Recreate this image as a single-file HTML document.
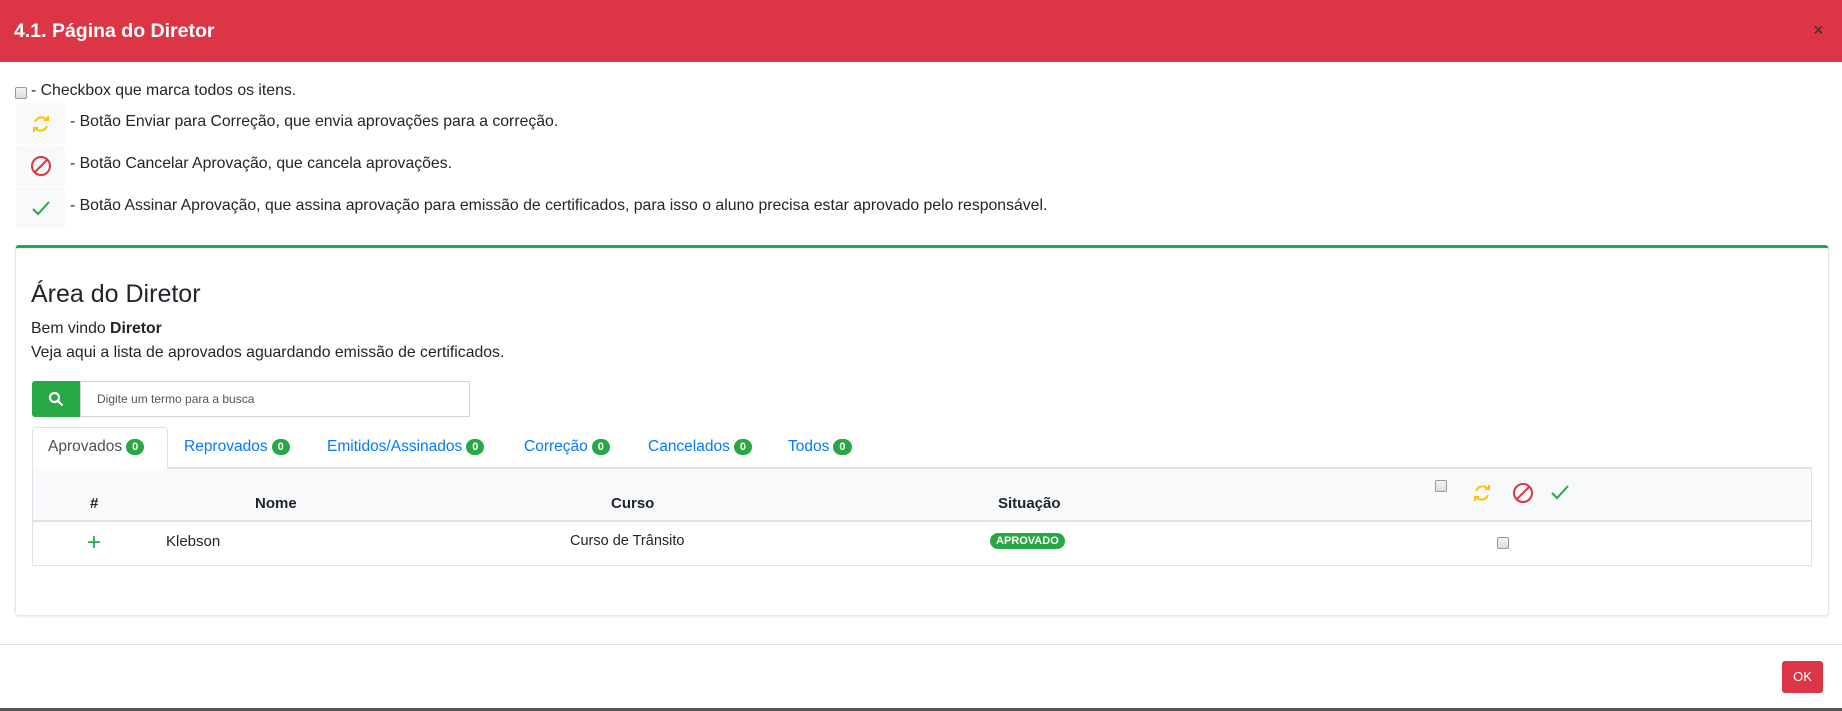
<!DOCTYPE html>
<html><head><meta charset="utf-8"><style>
body{margin:0;width:1842px;height:711px;overflow:hidden;background:#fff;font-family:"Liberation Sans",sans-serif;color:#212529;position:relative}
.a{position:absolute;white-space:nowrap}
.cb{position:absolute;width:10px;height:10px;border:1px solid #999;border-radius:2px;background:linear-gradient(#f4f4f4,#ddd)}
.ib{position:absolute;left:16px;width:49px;height:41px;background:#f8f9fa;border-radius:3px}
.ib svg{position:absolute;left:14px;top:10px}
.t{font-size:15.8px}
.tab{position:absolute;top:438px;font-size:15.5px;color:#007bff}
.bd{display:inline-block;background:#28a745;color:#fff;font-size:11px;font-weight:bold;border-radius:9px;padding:2px 6px;margin-left:4px;vertical-align:1px}
.th{font-size:15px;font-weight:bold}
</style></head><body>
<div class="a" style="left:0;top:0;width:1842px;height:62px;background:#dc3545"></div>
<div class="a" style="left:14px;top:20px;color:#fff;font-size:19.5px;font-weight:bold">4.1. Página do Diretor</div>
<div class="a" style="left:1813px;top:20px;color:#333;font-size:18px">×</div>

<div class="cb" style="left:15px;top:87px"></div>
<div class="a t" style="left:31px;top:82px">- Checkbox que marca todos os itens.</div>
<div class="ib" style="top:103px"><svg width="22" height="22" viewBox="0 0 22 22" fill="none" stroke="#ffc107" stroke-width="2"><path d="M5 9a7 7 0 0 1 12-2"/><path d="M17 13a7 7 0 0 1-12 2"/><path d="M14 7h4V3" /><path d="M8 15H4v4"/></svg></div>
<div class="a t" style="left:70px;top:113px">- Botão Enviar para Correção, que envia aprovações para a correção.</div>
<div class="ib" style="top:145px"><svg width="22" height="22" viewBox="0 0 22 22" fill="none" stroke="#dc3545" stroke-width="2"><circle cx="11" cy="11" r="9"/><path d="M5 17L17 5"/></svg></div>
<div class="a t" style="left:70px;top:155px">- Botão Cancelar Aprovação, que cancela aprovações.</div>
<div class="ib" style="top:187px"><svg width="22" height="22" viewBox="0 0 22 22" fill="none" stroke="#28a745" stroke-width="2"><path d="M3 12l5 5L19 5"/></svg></div>
<div class="a t" style="left:70px;top:197px">- Botão Assinar Aprovação, que assina aprovação para emissão de certificados, para isso o aluno precisa estar aprovado pelo responsável.</div>

<div class="a" style="left:15px;top:245px;width:1812px;height:367px;border:1px solid #e6e6e6;border-top:3px solid #28a745;border-radius:4px;box-shadow:0 1px 2px rgba(0,0,0,.08)"></div>
<div class="a" style="left:31px;top:280px;font-size:25px">Área do Diretor</div>
<div class="a t" style="left:31px;top:320px">Bem vindo <b>Diretor</b></div>
<div class="a t" style="left:31px;top:344px">Veja aqui a lista de aprovados aguardando emissão de certificados.</div>

<div class="a" style="left:32px;top:381px;width:48px;height:36px;background:#28a745;border-radius:3px 0 0 3px"><svg style="position:absolute;left:16px;top:10px" width="16" height="16" viewBox="0 0 16 16" fill="none" stroke="#fff" stroke-width="2.2"><circle cx="6.5" cy="6.5" r="4.5"/><path d="M10 10l4.5 4.5"/></svg></div>
<div class="a" style="left:80px;top:381px;width:388px;height:34px;border:1px solid #ced4da"></div>
<div class="a" style="left:97px;top:392px;font-size:12px;color:#555">Digite um termo para a busca</div>

<div class="a" style="left:32px;top:427px;width:134px;height:41px;border:1px solid #dee2e6;border-bottom:none;border-radius:4px 4px 0 0;background:#fff;z-index:2"></div>
<div class="tab" style="left:48px;color:#495057;z-index:3">Aprovados<span class="bd">0</span></div>
<div class="tab" style="left:184px">Reprovados<span class="bd">0</span></div>
<div class="tab" style="left:327px">Emitidos/Assinados<span class="bd">0</span></div>
<div class="tab" style="left:524px">Correção<span class="bd">0</span></div>
<div class="tab" style="left:648px">Cancelados<span class="bd">0</span></div>
<div class="tab" style="left:788px">Todos<span class="bd">0</span></div>

<div class="a" style="left:32px;top:467px;width:1778px;height:96px;border:1px solid #dee2e6;border-top:2px solid #dee2e6"></div>
<div class="a" style="left:33px;top:469px;width:1778px;height:51px;background:#f8f9fa;border-bottom:2px solid #dee2e6"></div>
<div class="a th" style="left:90px;top:495px">#</div>
<div class="a th" style="left:255px;top:495px">Nome</div>
<div class="a th" style="left:611px;top:495px">Curso</div>
<div class="a th" style="left:998px;top:495px">Situação</div>
<div class="cb" style="left:1435px;top:480px"></div>
<svg class="a" style="left:1471px;top:482px" width="22" height="22" viewBox="0 0 22 22" fill="none" stroke="#ffc107" stroke-width="2"><path d="M5 9a7 7 0 0 1 12-2"/><path d="M17 13a7 7 0 0 1-12 2"/><path d="M14 7h4V3"/><path d="M8 15H4v4"/></svg>
<svg class="a" style="left:1512px;top:482px" width="22" height="22" viewBox="0 0 22 22" fill="none" stroke="#dc3545" stroke-width="2"><circle cx="11" cy="11" r="9"/><path d="M5 17L17 5"/></svg>
<svg class="a" style="left:1549px;top:481px" width="22" height="22" viewBox="0 0 22 22" fill="none" stroke="#28a745" stroke-width="2"><path d="M3 12l5 5L19 5"/></svg>

<div class="a" style="left:87px;top:531px;font-size:24px;color:#28a745;line-height:24px">+</div>
<div class="a" style="left:166px;top:533px;font-size:15px">Klebson</div>
<div class="a" style="left:570px;top:533px;font-size:14.5px">Curso de Trânsito</div>
<div class="a" style="left:990px;top:533px;background:#28a745;color:#fff;font-size:11px;font-weight:bold;border-radius:9px;padding:2px 6px">APROVADO</div>
<div class="cb" style="left:1497px;top:537px"></div>

<div class="a" style="left:0;top:644px;width:1842px;height:1px;background:#dee2e6"></div>
<div class="a" style="left:1782px;top:661px;width:41px;height:32px;background:#dc3545;border-radius:3px;color:#fff;font-size:13px;text-align:center;line-height:32px">OK</div>
<div class="a" style="left:0;top:708px;width:1842px;height:3px;background:#555"></div>
</body></html>
